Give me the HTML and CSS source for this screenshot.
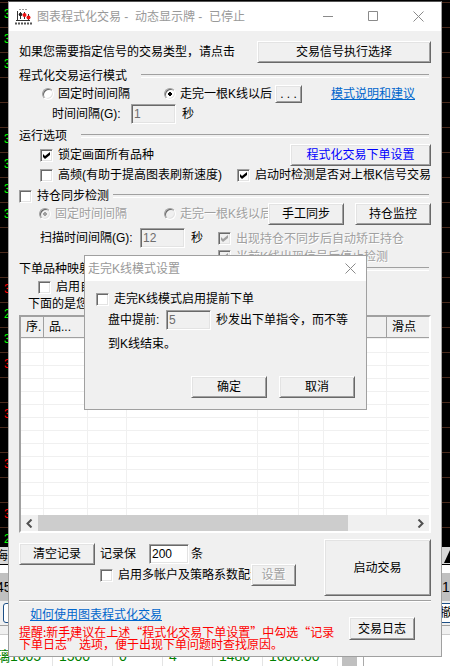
FILE: index.html
```html
<!DOCTYPE html>
<html lang="zh-CN">
<head>
  <meta charset="UTF-8">
  <meta name="viewport" content="width=device-width, initial-scale=1.0">
  <title>图表程式化交易</title>
  <link rel="stylesheet" href="styles.css">
</head>

<body>

<div class="desktop">
  <div class="chart">
    <span class="up">3</span><span class="up">3</span><span class="up">3</span><span></span><span></span>
    <span class="up">3</span><span class="up">3</span><span class="up">3</span><span class="up">3</span><span></span><span></span>
    <span class="down">3</span><span class="up">2</span><span class="up">3</span><span class="down">3</span><span></span>
    <span class="down">3</span><span></span><span class="down">3</span><span></span><span class="down">3</span><span class="up">2</span>
  </div>
  <div class="tabs"><span>海</span><svg width="8" height="16" viewBox="0 0 8 16"><path d="M8 3L2 16H8Z" fill="#000"/></svg></div>
  <div class="numbers"><span>45</span><span>16</span></div>
  <div class="tools"><span class="tool"></span><span class="tool">撤</span></div>
  <div class="quotes">
    <span>璃1605</span><span>1500</span><span>0</span><span>4</span><span>1480</span><span>1600.00</span><i></i><b></b>
  </div>
</div>

<main class="window">
  <header class="titlebar">
    <svg class="logo" width="18" height="18" viewBox="0 0 18 18">
      <path d="M4 1.500h8" stroke="#999" stroke-dasharray="2 1"/>
      <path d="M2.500 3v10M1 12.500h14M5.500 4v7M9.500 4v7M13.500 6v7" stroke="#333" fill="none"/>
      <circle cx="5.500" cy="6.500" r="1.800" fill="#222"/>
      <circle cx="9.500" cy="7" r="2" fill="#e11"/>
      <circle cx="13.500" cy="9.500" r="2" fill="#e11"/>
      <path d="M0 15.500h17" stroke="#555" stroke-width="2" stroke-dasharray="2 1"/>
    </svg>
    <h1>图表程式化交易 -&nbsp; 动态显示牌 -&nbsp; 已停止</h1>
    <button class="caption-btn" aria-label="最小化"><svg width="11" height="11"><path d="M0 5.500h10"/></svg></button>
    <button class="caption-btn" aria-label="最大化"><svg width="11" height="11"><path d="M.5 .5h9v9h-9z"/></svg></button>
    <button class="caption-btn" aria-label="关闭"><svg width="11" height="11"><path d="M.5 .5l10 10M10.500 .5l-10 10"/></svg></button>
  </header>

  <div class="content">
    <div class="row">
      <span>如果您需要指定信号的交易类型，请点击</span>
      <button class="btn btn-signal">交易信号执行选择</button>
    </div>

    <div class="legend">程式化交易运行模式</div>
    <div class="row modes">
      <label class="first"><input type="radio" name="mode">固定时间间隔</label>
      <label><input type="radio" name="mode" checked>走完一根K线以后</label>
      <button class="btn btn-more">. . .</button>
      <a class="help" href="#">模式说明和建议</a>
    </div>
    <div class="row interval">
      <label for="interval">时间间隔(G):</label>
      <input class="field" type="text" id="interval" value="1" disabled>
      <span>秒</span>
    </div>

    <div class="legend">运行选项</div>
    <div class="row options">
      <label><input type="checkbox" checked>锁定画面所有品种</label>
      <button class="btn btn-order">程式化交易下单设置</button>
    </div>
    <div class="row options">
      <label><input type="checkbox">高频(有助于提高图表刷新速度)</label>
      <label class="end"><input type="checkbox" checked>启动时检测是否对上根K信号交易</label>
    </div>

    <div class="legend"><label><input type="checkbox">持仓同步检测</label></div>
    <div class="row modes sync">
      <label class="first off"><input type="radio" name="sync" checked disabled>固定时间间隔</label>
      <label class="off cut"><input type="radio" name="sync" disabled>走完一根K线以后</label>
      <div class="pair">
        <button class="btn">手工同步</button>
        <button class="btn">持仓监控</button>
      </div>
    </div>
    <div class="scan">
      <div class="row">
        <label for="scan">扫描时间间隔(G):</label>
        <input class="field" type="text" id="scan" value="12" disabled>
        <span>秒</span>
      </div>
      <div class="checks">
        <label class="off"><input type="checkbox" checked disabled>出现持仓不同步后自动矫正持仓</label>
        <label class="off"><input type="checkbox" checked disabled>当前K线出现信号后停止检测</label>
      </div>
    </div>

    <div class="legend mapping">下单品种映射</div>
    <div class="row auto"><label><input type="checkbox">启用自</label></div>
    <p class="note">下面的是您</p>

    <div class="list">
      <table>
        <colgroup>
          <col class="c1"><col class="c2"><col class="c3"><col class="c4"><col class="c5"><col class="c6"><col class="c7"><col>
        </colgroup>
        <thead>
          <tr><th>序.</th><th>品...</th><th></th><th></th><th></th><th></th><th></th><th>滑点</th></tr>
        </thead>
        <tbody id="rows"></tbody>
      </table>
      <div class="scrollbar">
        <button aria-label="向左"><svg width="7" height="9"><path d="M5.500 .5l-4 4 4 4"/></svg></button>
        <div class="track"><div class="thumb"></div></div>
        <button aria-label="向右"><svg width="7" height="9"><path d="M1.500 .5l4 4-4 4"/></svg></button>
      </div>
    </div>

    <div class="actions">
      <div class="records">
        <div class="row">
          <button class="btn">清空记录</button>
          <label class="keep" for="keep">记录保</label>
          <input class="field" type="text" id="keep" value="200">
          <span>条</span>
        </div>
        <div class="row multi">
          <label><input type="checkbox">启用多帐户及策略系数配置</label>
          <button class="btn btn-small" disabled>设置</button>
        </div>
      </div>
      <button class="btn btn-start">启动交易</button>
    </div>

    <footer>
      <div>
        <a href="#">如何使用图表程式化交易</a>
        <p class="tip">提醒:新手建议在上述“程式化交易下单设置”中勾选“记录<br>下单日志”选项，便于出现下单问题时查找原因。</p>
      </div>
      <button class="btn btn-log">交易日志</button>
    </footer>
  </div>
</main>

<div class="dialog" role="dialog" aria-labelledby="dialogTitle">
  <header class="titlebar">
    <h2 id="dialogTitle">走完K线模式设置</h2>
    <button class="caption-btn" aria-label="关闭"><svg width="11" height="11"><path d="M.5 .5l10 10M10.500 .5l-10 10"/></svg></button>
  </header>
  <div class="dialog-body">
    <label><input type="checkbox">走完K线模式启用提前下单</label>
    <div class="row ahead">
      <label for="ahead">盘中提前:</label>
      <input class="field" type="text" id="ahead" value="5" disabled>
      <span>秒发出下单指令，而不等</span>
    </div>
    <p>到K线结束。</p>
    <div class="dialog-buttons">
      <button class="btn">确定</button>
      <button class="btn">取消</button>
    </div>
  </div>
</div>

<script>
  const rows = document.getElementById('rows');
  for (let i = 0; i < 14; i++) {
    const row = rows.insertRow();
    for (let j = 0; j < 8; j++) {
      row.insertCell();
    }
  }
</script>
</body>
</html>
```
FILE: styles.css
```css
* {
  box-sizing: border-box;
}

body {
  margin: 0;
  height: 100vh;
  overflow: hidden;
  display: grid;
  grid-template-columns: 100%;
  font: 12px/18px "Liberation Sans", "Noto Sans CJK SC", sans-serif;
  color: #000;
}

button,
input {
  font: inherit;
  color: inherit;
}

p, h1, h2 {
  margin: 0;
}

a {
  color: #0066cc;
}

/* what lies behind the window */
.desktop,
.window {
  grid-area: 1 / 1;
}

.desktop {
  height: 100vh;
  overflow: hidden;
  background: #f0f0f0;
}

.chart {
  height: 547px;
  padding: 2px 0 0 4px;
  overflow: hidden;
  background: #000 repeating-linear-gradient(transparent 0 2px, #4b2a1c 2px 3px, transparent 3px 25px);
}

.chart span {
  display: block;
  height: 25px;
  line-height: 25px;
}

.up { color: #00ff00; }
.down { color: #ff0000; }

.tabs,
.numbers,
.tools {
  display: flex;
  justify-content: space-between;
}

.tabs {
  height: 18px;
  background: #d8d8d8;
  border-bottom: 1px solid #000;
}

.tabs span {
  margin-left: -4px;
}

.numbers {
  height: 36px;
  border-top: 8px solid #fff;
  background: #c0c0c0;
  font-size: 14px;
  line-height: 28px;
}

.numbers span:first-child {
  margin-left: -4px;
}

.numbers span:last-child {
  width: 8px;
}

.tools {
  height: 25px;
  padding: 2px 0 2px 3px;
  border-bottom: 1px solid #a0a0a0;
}

.tool {
  width: 20px;
  border: 1px solid #1c4f86;
  border-radius: 3px;
  background: #fff;
}

.tool:last-child {
  width: 10px;
  border-radius: 0;
  border-width: 1px 0;
}

.quotes {
  height: 40px;
  margin-top: 8px;
  padding-top: 12px;
  display: grid;
  grid-template-columns: 53px 60px 50px 50px 50px 75px 25px 1fr;
  background: #fff;
  border-top: 1px solid #ccc;
  font-size: 14px;
  color: #008000;
}

.quotes span {
  border-right: 1px solid #e4e4e4;
  padding-left: 6px;
}

.quotes span:first-child {
  padding-left: 0;
  margin-left: -4px;
}

.quotes i {
  margin: 0 6px 0 4px;
  background: #c0c0c0;
}

.quotes b {
  border-left: 1px solid #aaa;
}

/* windows */
.window {
  align-self: start;
  margin: 1px 8px 0;
  position: relative;
  background: #f0f0f0;
  border: 1px solid #a0a0a0;
  border-top-color: #555;
  white-space: nowrap;
}

.titlebar {
  display: flex;
  align-items: center;
  height: 29px;
  padding-left: 6px;
  background: #fff;
  color: #999;
}

.titlebar h1,
.titlebar h2 {
  flex: 1;
  font-size: 12px;
  font-weight: normal;
}

.logo {
  margin-right: 4px;
}

.caption-btn {
  width: 45px;
  height: 100%;
  padding: 0;
  border: 0;
  background: none;
}

.caption-btn svg {
  display: block;
  margin: auto;
  fill: none;
  stroke: #8a8a8a;
}

.content {
  padding: 10px 10px 6px;
}

.row {
  display: flex;
  align-items: center;
}

label {
  display: flex;
  align-items: center;
}

/* classic controls */
.btn {
  width: 76px;
  height: 22px;
  padding: 0;
  flex: none;
  background: #f0f0f0;
  border: 1px solid;
  border-color: #fff #696969 #696969 #fff;
  box-shadow: inset 1px 1px #e3e3e3, inset -1px -1px #a0a0a0;
  line-height: 18px;
}

.field {
  width: 45px;
  height: 20px;
  padding: 0 2px;
  background: #fff;
  border: 1px solid;
  border-color: #a0a0a0 #fff #fff #a0a0a0;
  box-shadow: inset 1px 1px #696969, inset -1px -1px #e3e3e3;
}

.field:disabled {
  background: #f0f0f0;
  color: #6d6d6d;
}

.off,
.btn:disabled {
  color: #a0a0a0;
  text-shadow: 1px 1px #fff;
}

input[type="checkbox"],
input[type="radio"] {
  appearance: none;
  flex: none;
  width: 13px;
  height: 13px;
  margin: 0 5px 0 0;
  background: #fff center no-repeat;
  border: 1px solid;
  border-color: #a0a0a0 #fff #fff #a0a0a0;
  box-shadow: inset 1px 1px #696969, inset -1px -1px #e3e3e3;
}

input[type="radio"] {
  width: 12px;
  height: 12px;
  margin-right: 4px;
  border-radius: 50%;
}

input[type="checkbox"]:checked {
  background-image: url("data:image/svg+xml,%3Csvg xmlns='http://www.w3.org/2000/svg' width='7' height='7'%3E%3Cpath d='M0 2l2 2 5-4v3l-5 4-2-2z'/%3E%3C/svg%3E");
}

input[type="radio"]:checked {
  background-image: radial-gradient(#000 0 2px, transparent 2px);
}

input[type="checkbox"]:disabled,
input[type="radio"]:disabled {
  background-color: #f0f0f0;
}

input[type="checkbox"]:disabled:checked {
  background-image: url("data:image/svg+xml,%3Csvg xmlns='http://www.w3.org/2000/svg' width='7' height='7'%3E%3Cpath fill='%23a0a0a0' d='M0 2l2 2 5-4v3l-5 4-2-2z'/%3E%3C/svg%3E");
}

input[type="radio"]:disabled:checked {
  background-image: radial-gradient(#a0a0a0 0 2px, transparent 2px);
}

.btn-signal {
  width: 174px;
  margin-left: auto;
}

.legend {
  display: flex;
  align-items: center;
  height: 12px;
  margin: 5px 2px 3px 0;
}

.legend::after {
  content: "";
  flex: 1;
  height: 2px;
  margin-left: 14px;
  border-top: 1px solid #a0a0a0;
  border-bottom: 1px solid #fff;
}

.row + .legend:nth-child(2) {
  margin-top: 7px;
}

.legend:has(label)::after {
  margin-left: 4px;
}

.modes {
  height: 18px;
  padding-left: 23px;
}

.modes .first {
  width: 122px;
}

.btn-more {
  width: 27px;
  height: 18px;
  margin-left: 3px;
  line-height: 10px;
}

.help {
  margin-left: auto;
  margin-right: 16px;
}

.interval {
  height: 22px;
  padding-left: 33px;
}

.interval .field,
.scan .field {
  margin: 0 6px 0 5px;
}

.interval label {
  width: 74px;
}

.options {
  height: 20px;
  padding-left: 21px;
}

.btn-order {
  width: 141px;
  margin-left: auto;
  color: #0000ff;
}

.end {
  margin-left: auto;
}

.sync {
  padding-left: 20px;
}

.sync .first {
  width: 125px;
  flex: none;
}

.cut {
  flex: 1;
  overflow: hidden;
}

.pair {
  display: flex;
  gap: 11px;
}

.scan {
  display: grid;
  grid-template-columns: 199px 1fr;
  align-items: start;
  margin-top: 4px;
}

.scan .row {
  height: 22px;
  padding-left: 21px;
}

.scan .row label {
  width: 95px;
}

.checks {
  display: grid;
  gap: 5px;
  padding-top: 5px;
}

.checks label {
  height: 13px;
}

.mapping {
  margin-top: 0;
}

.auto {
  height: 18px;
  padding-left: 19px;
}

.note {
  padding-left: 9px;
  line-height: 16px;
}

/* mapping table */
.list {
  margin-top: 3px;
  border: 2px solid;
  border-color: #a0a0a0 #fff #fff #a0a0a0;
  background: #fff;
}

table {
  width: 100%;
  table-layout: fixed;
  border-collapse: separate;
  border-spacing: 0;
}

.c1 { width: 23px; }
.c2 { width: 44px; }
.c3 { width: 39px; }
.c4 { width: 131px; }
.c5 { width: 41px; }
.c6 { width: 25px; }
.c7 { width: 63px; }

th {
  height: 21px;
  padding: 0 0 0 5px;
  background: #f0f0f0;
  border-right: 1px solid #a0a0a0;
  border-bottom: 1px solid #a0a0a0;
  font-weight: normal;
  text-align: left;
}

td {
  height: 13px;
  padding: 0;
  border-right: 1px solid #f0f0f0;
  border-bottom: 1px solid #f0f0f0;
}

tbody tr:first-child td {
  height: 15px;
  border-top: 1px solid #f0f0f0;
}

tbody tr:last-child td {
  height: 6px;
  border-bottom: 0;
}

th:last-child,
td:last-child {
  border-right: 0;
}

.scrollbar {
  display: flex;
  height: 16px;
  background: #f0f0f0;
}

.scrollbar button {
  width: 17px;
  padding: 0;
  border: 0;
  background: none;
}

.scrollbar svg {
  display: block;
  margin: auto;
  fill: none;
  stroke: #505050;
  stroke-width: 2;
}

.track {
  flex: 1;
}

.thumb {
  width: 83%;
  height: 100%;
  background: #cdcdcd;
}

/* bottom */
.actions {
  display: flex;
  justify-content: space-between;
  margin-top: 6px;
  padding-bottom: 4px;
  border-bottom: 1px solid #a0a0a0;
  box-shadow: 0 1px #fff;
}

.records {
  padding-top: 4px;
}

.keep {
  width: 54px;
  padding-left: 5px;
}

.records .field {
  width: 40px;
  margin-right: 2px;
}

.multi {
  height: 20px;
  padding-left: 81px;
}

.multi label {
  width: 151px;
  overflow: hidden;
}

.btn-small {
  width: 45px;
}

.btn-start {
  width: 107px;
  height: 57px;
}

footer {
  display: flex;
  align-items: center;
  justify-content: space-between;
  padding: 6px 16px 0 0;
}

footer a {
  display: block;
  width: fit-content;
  margin: 0 0 3px 11px;
  line-height: 16px;
}

.tip {
  font-family: "Noto Sans CJK SC", sans-serif;
  line-height: 12px;
  color: #ff0000;
}

.btn-log {
  width: 66px;
  height: 23px;
}

/* modal window over the main one */
.dialog {
  position: absolute;
  left: 84px;
  top: 255px;
  width: 283px;
  background: #f0f0f0;
  border: 1px solid #a0a0a0;
  white-space: nowrap;
}

.dialog .titlebar {
  height: 25px;
  padding-left: 3px;
}

.dialog .caption-btn {
  width: 32px;
}

.dialog-body {
  padding: 9px 11px 11px;
}

.ahead {
  height: 24px;
  padding-left: 12px;
}

.ahead label {
  width: 58px;
}

.ahead .field {
  margin-right: 5px;
}

.dialog-body p {
  padding-left: 12px;
  line-height: 24px;
}

.dialog-buttons {
  display: flex;
  justify-content: flex-end;
  gap: 12px;
  margin-top: 20px;
}
```
